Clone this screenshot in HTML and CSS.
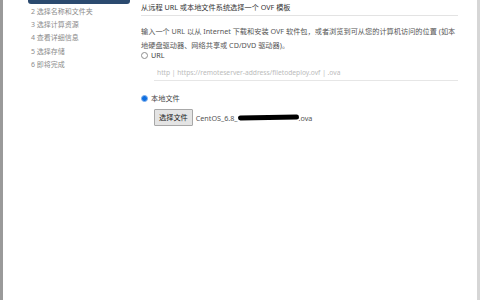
FILE: index.html
```html
<!DOCTYPE html>
<html>
<head>
  <meta charset="utf-8">
  <title>部署 OVF 模板</title>
  <link rel="stylesheet" href="styles.css">
</head>

<body>
  <div class="frame">
    <ul class="steps">
      <li class="step-current"></li>
      <li>2 选择名称和文件夹</li>
      <li>3 选择计算资源</li>
      <li>4 查看详细信息</li>
      <li>5 选择存储</li>
      <li>6 即将完成</li>
    </ul>

    <form class="content">
      <div class="title">从远程 URL 或本地文件系统选择一个 OVF 模板</div>
      <p class="desc">输入一个 URL 以从 Internet 下载和安装 OVF 软件包，或者浏览到可从您的计算机访问的位置 (如本地硬盘驱动器、网络共享或 CD/DVD 驱动器)。</p>

      <label class="radio-row">
        <input type="radio" name="source" value="url">
        <span>URL</span>
      </label>
      <div class="url-field">
        <input type="text" placeholder="http | https://remoteserver-address/filetodeploy.ovf | .ova">
      </div>

      <label class="radio-row local">
        <input type="radio" name="source" value="local" checked>
        <span>本地文件</span>
      </label>
      <div class="file-row">
        <span class="file-btn">选择文件</span>
        <span class="file-name">CentOS_6.8_<span class="redacted"></span>.ova</span>
      </div>
    </form>
  </div>
</body>

</html>
```

FILE: styles.css
```css
body {
  margin: 0;
  font-family: "Noto Sans", "Noto Sans CJK SC", sans-serif;
  background: #fff;
}

.frame {
  display: flex;
  height: 300px;
  box-sizing: border-box;
  border-left: 3px solid #9a9a9a;
  border-right: 3px solid #d6d6d6;
  overflow: hidden;
}

.steps {
  list-style: none;
  margin: 0;
  padding: 0 0 0 25px;
  width: 113px;
  flex: none;
}

.steps li {
  font-size: 7px;
  color: #8c8c8c;
  height: 13.4px;
  line-height: 13.4px;
  padding-left: 3px;
  white-space: nowrap;
}

.steps li.step-current {
  height: 4px;
  margin-bottom: 0.5px;
  background: #2b4a6f;
  border-radius: 0 0 3px 3px;
  width: 102px;
  padding: 0;
}

.content {
  flex: 1;
  padding: 2px 17px 0 0;
  font-size: 7.2px;
  color: #444;
}

.title {
  line-height: 10px;
  padding-bottom: 3px;
  border-bottom: 1px solid #e3e3e3;
  color: #333;
  margin-right: 2px;
}

.desc {
  margin: 8px 0 0;
  line-height: 14px;
  color: #555;
}

.radio-row {
  display: flex;
  align-items: center;
  gap: 3px;
  height: 10px;
  margin-top: -2px;
}

.radio-row input {
  -webkit-appearance: none;
  appearance: none;
  margin: 0;
  width: 7px;
  height: 7px;
  border: 1px solid #8e8e8e;
  border-radius: 50%;
  box-sizing: border-box;
  background: #fff;
}

.radio-row input:checked {
  border: 1px solid #7fb0ee;
  background: #0f6fe0;
}

.radio-row.local {
  margin-top: 12px;
}

.url-field {
  padding: 5px 2px 0 13px;
}

.url-field input {
  display: block;
  width: 100%;
  box-sizing: border-box;
  border: none;
  border-bottom: 1px solid #e6e6e6;
  padding: 3px 3px 3px;
  font-family: inherit;
  font-size: 6.7px;
  color: #444;
  outline: none;
}

.url-field input::placeholder {
  color: #bbb;
}

.file-row {
  display: flex;
  align-items: center;
  gap: 3px;
  margin: 6px 0 0 13px;
}

.file-btn {
  display: inline-block;
  padding: 3px 4px;
  background: #e4e4e4;
  border: 1px solid #a8a8a8;
  border-radius: 1px;
  color: #222;
  line-height: 9px;
}

.file-name {
  color: #555;
  display: flex;
  align-items: center;
}

.redacted {
  display: inline-block;
  width: 61px;
  height: 5px;
  background: #000;
  border-radius: 3px;
  transform: rotate(-1deg);
}
```
